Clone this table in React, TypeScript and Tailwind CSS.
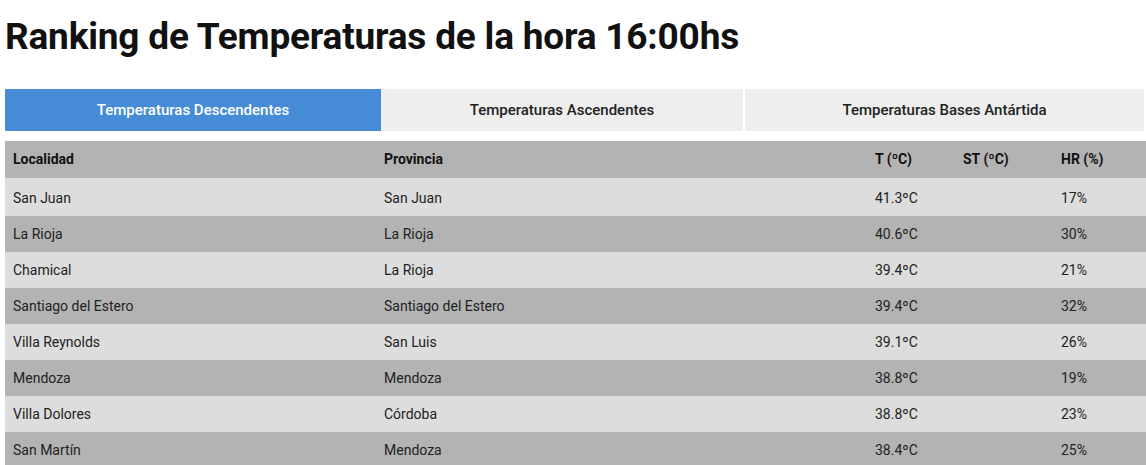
import React from 'react';

type Row = { localidad: string; provincia: string; t: string; st: string; hr: string };

const rows: Row[] = [
  { localidad: 'San Juan', provincia: 'San Juan', t: '41.3ºC', st: '', hr: '17%' },
  { localidad: 'La Rioja', provincia: 'La Rioja', t: '40.6ºC', st: '', hr: '30%' },
  { localidad: 'Chamical', provincia: 'La Rioja', t: '39.4ºC', st: '', hr: '21%' },
  { localidad: 'Santiago del Estero', provincia: 'Santiago del Estero', t: '39.4ºC', st: '', hr: '32%' },
  { localidad: 'Villa Reynolds', provincia: 'San Luis', t: '39.1ºC', st: '', hr: '26%' },
  { localidad: 'Mendoza', provincia: 'Mendoza', t: '38.8ºC', st: '', hr: '19%' },
  { localidad: 'Villa Dolores', provincia: 'Córdoba', t: '38.8ºC', st: '', hr: '23%' },
  { localidad: 'San Martín', provincia: 'Mendoza', t: '38.4ºC', st: '', hr: '25%' },
];

const tabs = ['Temperaturas Descendentes', 'Temperaturas Ascendentes', 'Temperaturas Bases Antártida'];

const App: React.FC = () => {
  return (
    <div className="min-h-screen bg-white px-[5px] text-[#222]" style={{ fontFamily: 'Roboto, "Liberation Sans", sans-serif' }}>
      <h1 className="pt-[14px] pb-[29px] text-[37px] leading-[46px] font-bold text-[#111] tracking-[-0.2px]">
        Ranking de Temperaturas de la hora 16:00hs
      </h1>

      <div className="flex h-[42px] w-[1139px] text-[15px] font-medium">
        <button className="w-[376px] bg-[#468bd6] text-white">{tabs[0]}</button>
        <button className="w-[362px] bg-[#eeeeee] text-[#222]">{tabs[1]}</button>
        <div className="w-[2px] bg-white" />
        <button className="flex-1 bg-[#eeeeee] text-[#222]">{tabs[2]}</button>
      </div>

      <table className="mt-[10px] w-[1150px] table-fixed border-collapse text-[14px]">
        <colgroup>
          <col className="w-[371px]" />
          <col className="w-[491px]" />
          <col className="w-[88px]" />
          <col className="w-[98px]" />
          <col />
        </colgroup>
        <thead>
          <tr className="h-[37px] bg-[#b3b3b3] text-left font-bold text-[#111]">
            <th className="px-[8px] font-bold">Localidad</th>
            <th className="px-[8px] font-bold">Provincia</th>
            <th className="px-[8px] font-bold">T (ºC)</th>
            <th className="px-[8px] font-bold">ST (ºC)</th>
            <th className="px-[8px] font-bold">HR (%)</th>
          </tr>
        </thead>
        <tbody>
          {rows.map((r, i) => (
            <tr key={r.localidad} className={`${i === 0 ? 'h-[38px] [&>td]:pt-[2px]' : 'h-[36px]'} ${i % 2 === 0 ? 'bg-[#dddddd]' : 'bg-[#b3b3b3]'}`}>
              <td className="px-[8px]">{r.localidad}</td>
              <td className="px-[8px]">{r.provincia}</td>
              <td className="px-[8px]">{r.t}</td>
              <td className="px-[8px]">{r.st}</td>
              <td className="px-[8px]">{r.hr}</td>
            </tr>
          ))}
        </tbody>
      </table>
    </div>
  );
};

export default App;
